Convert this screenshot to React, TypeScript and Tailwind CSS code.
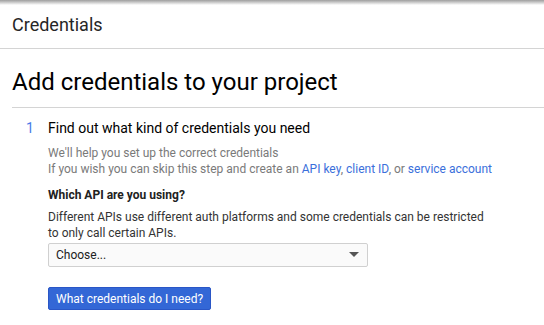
const Link = ({ children }: { children: React.ReactNode }) => (
  <a className="text-[#3b6fdb] cursor-pointer">{children}</a>
);

export default function App() {
  return (
    <div
      className="w-[544px] h-[325px] bg-white overflow-hidden text-[#212121]"
      style={{ fontFamily: 'Roboto, "Liberation Sans", sans-serif' }}
    >
      <div className="h-[5px] bg-gradient-to-b from-[#9e9e9e] to-white" />
      <header className="h-[44px] border-b border-[#d4d4d4] px-3 flex items-center">
        <h1 className="text-[18px] leading-none pb-[3px] text-[#262626]">Credentials</h1>
      </header>

      <div className="pl-3">
        <h2 className="text-[24px] leading-none pt-[21px] pb-[13px] border-b border-[#d4d4d4] text-black">
          Add credentials to your project
        </h2>

        <div className="flex pt-[10px]">
          <div className="w-[36px] pl-[14px] text-[14px] leading-[20px] text-[#4a7be8]">1</div>
          <div className="flex-1">
            <h3 className="text-[14px] leading-[20px] text-black">
              Find out what kind of credentials you need
            </h3>
            <p className="mt-[7px] text-[12px] leading-[16px] text-[#7a7a7a]">
              We'll help you set up the correct credentials
              <br />
              If you wish you can skip this step and create an <Link>API key</Link>,{' '}
              <Link>client ID</Link>, or <Link>service account</Link>
            </p>
            <p className="mt-[10px] text-[12px] leading-[16px] font-bold text-[#212121]">
              Which API are you using?
            </p>
            <p className="mt-[6px] text-[12px] leading-[16px] text-[#333]">
              Different APIs use different auth platforms and some credentials can be restricted
              <br />
              to only call certain APIs.
            </p>
            <div className="mt-[2px] w-[320px] h-[24px] border border-[#d0d0d0] rounded-[2px] bg-[#fafafa] flex items-center justify-between pl-[7px] pr-[7px]">
              <span className="text-[12px] text-[#212121]">Choose...</span>
              <svg width="10" height="6" viewBox="0 0 10 6" className="mr-[1px]">
                <path d="M0 0h10L5 5z" fill="#555" />
              </svg>
            </div>
            <button className="mt-[20px] h-[23px] px-[7px] bg-[#3367d6] border border-[#2a56c6] rounded-[2px] text-white text-[12px] leading-none">
              What credentials do I need?
            </button>
          </div>
        </div>
      </div>
    </div>
  );
}
